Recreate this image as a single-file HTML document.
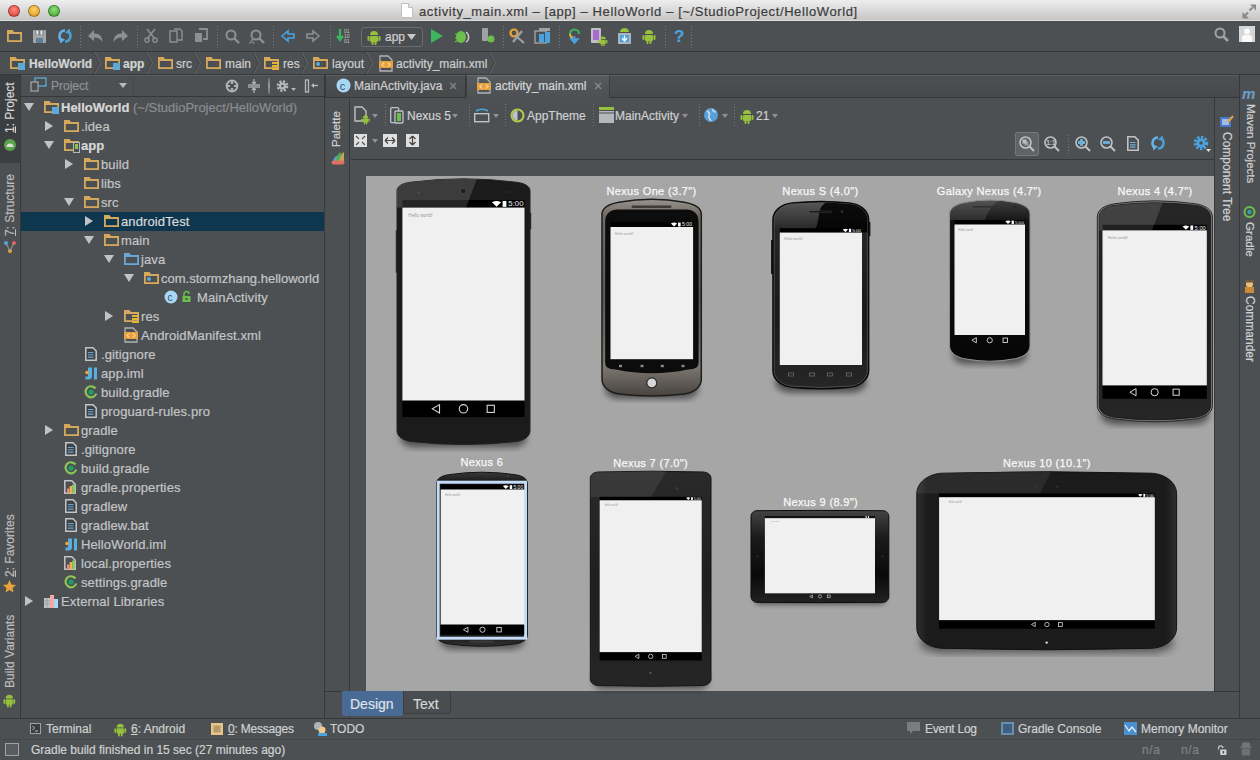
<!DOCTYPE html><html><head><meta charset="utf-8"><style>
*{margin:0;padding:0;box-sizing:border-box}
html,body{width:1260px;height:760px;overflow:hidden;background:#4d5053;font-family:"Liberation Sans",sans-serif;color:#bbbcbd}
.ab{position:absolute}
.t{position:absolute;white-space:nowrap;line-height:1;-webkit-text-stroke:0.2px currentColor}
svg{position:absolute;overflow:visible}
.vt{position:absolute;white-space:nowrap;line-height:1;-webkit-text-stroke:0.2px currentColor;transform-origin:0 0;transform:rotate(-90deg)}
.vr{position:absolute;white-space:nowrap;line-height:1;-webkit-text-stroke:0.2px currentColor;transform-origin:0 0;transform:rotate(90deg)}
</style></head><body>
<div class="ab" style="left:0px;top:0px;width:1260px;height:21px;background:linear-gradient(#eeeeee,#e6e6e6 20%,#c6c6c6);border-bottom:1px solid #dcdcdc"></div>
<div class="ab" style="left:8px;top:5px;width:12px;height:12px;border-radius:50%;background:radial-gradient(circle at 50% 35%,#ff8a80,#d63a2e);border:1px solid rgba(0,0,0,0.3)"></div>
<div class="ab" style="left:28px;top:5px;width:12px;height:12px;border-radius:50%;background:radial-gradient(circle at 50% 35%,#ffd36a,#d9951a);border:1px solid rgba(0,0,0,0.3)"></div>
<div class="ab" style="left:48px;top:5px;width:12px;height:12px;border-radius:50%;background:radial-gradient(circle at 50% 35%,#8ee07a,#3a9e2c);border:1px solid rgba(0,0,0,0.3)"></div>
<svg style="left:401px;top:3px" width="12" height="15" viewBox="0 0 12 15"><path d="M0.5 0.5h7l4 4v10h-11z" fill="#fff" stroke="#c0c0c0"/><path d="M7.5 0.5v4h4" fill="#e8e8e8" stroke="#c0c0c0"/></svg>
<div class="t" style="left:419px;top:5px;font-size:13px;color:#3c3c3c;letter-spacing:0.6px">activity_main.xml – [app] – HelloWorld – [~/StudioProject/HelloWorld]</div>
<svg style="left:1242px;top:4px" width="14" height="15" viewBox="0 0 14 15"><path d="M7.5 6.5l3-3" stroke="#8a8a8a" stroke-width="2"/><path d="M8 0.5h6v6z" fill="#8a8a8a"/><path d="M6 8.5l-3 3" stroke="#8a8a8a" stroke-width="2"/><path d="M0.5 8v6.5h6.5z" fill="#8a8a8a"/></svg>
<div class="ab" style="left:0px;top:51px;width:1260px;height:1px;background:#36383a"></div>
<svg style="left:7px;top:30px" width="15" height="12" viewBox="0 0 15 12"><path d="M0 0h5.5l1.5 2H15 v2H0z" fill="#d6a85c"/><rect x="0.9" y="2.9" width="13.2" height="8.2" fill="none" stroke="#d6a85c" stroke-width="1.8"/></svg>
<svg style="left:33px;top:30px" width="13" height="13" viewBox="0 0 13 13"><rect x="0" y="0" width="13" height="13" rx="1" fill="#a3a7aa"/><rect x="2.5" y="0" width="8" height="5" fill="#7c8083"/><rect x="3.5" y="0.5" width="1.8" height="4" fill="#eee"/><rect x="7.5" y="0.5" width="1.8" height="4" fill="#eee"/><rect x="3" y="8" width="7" height="5" fill="#5f7f98"/></svg>
<svg style="left:57px;top:28px" width="16" height="16" viewBox="0 0 16 16"><path d="M8 2.5A5.5 5.5 0 0 0 4.6 12.3" stroke="#62b2e4" stroke-width="2.6" fill="none"/><path d="M1.8 9.8L8 11.2 3.6 15.5Z" fill="#62b2e4"/><path d="M8 13.5A5.5 5.5 0 0 0 11.4 3.7" stroke="#4a9fd6" stroke-width="2.6" fill="none"/><path d="M14.2 6.2L8 4.8 12.4 0.5Z" fill="#4a9fd6"/></svg>
<svg style="left:80px;top:26px" width="1" height="22" viewBox="0 0 1 22"><line x1="0.5" y1="0" x2="0.5" y2="22" stroke="#75787a" stroke-dasharray="1 2"/></svg>
<svg style="left:88px;top:29px" width="15" height="13" viewBox="0 0 15 13"><path d="M0 7l6-6v3.5c5 0 8.5 2.5 8.5 8.5-2-3.5-5-4.5-8.5-4.5V12z" fill="#8d9093"/></svg>
<svg style="left:113px;top:29px" width="15" height="13" viewBox="0 0 15 13"><path d="M15 7l-6-6v3.5c-5 0-8.5 2.5-8.5 8.5 2-3.5 5-4.5 8.5-4.5V12z" fill="#8d9093"/></svg>
<svg style="left:137px;top:26px" width="1" height="22" viewBox="0 0 1 22"><line x1="0.5" y1="0" x2="0.5" y2="22" stroke="#75787a" stroke-dasharray="1 2"/></svg>
<svg style="left:144px;top:28px" width="14" height="15" viewBox="0 0 14 15"><path d="M3 1l8 10M11 1L3 11" stroke="#8d9093" stroke-width="1.5"/><circle cx="3" cy="12" r="2.2" fill="none" stroke="#8d9093" stroke-width="1.3"/><circle cx="11" cy="12" r="2.2" fill="none" stroke="#8d9093" stroke-width="1.3"/></svg>
<svg style="left:169px;top:28px" width="14" height="15" viewBox="0 0 14 15"><path d="M1 3h7v11H1z M5 1h6l2 2v9H8" fill="none" stroke="#8d9093" stroke-width="1.4"/></svg>
<svg style="left:194px;top:28px" width="14" height="15" viewBox="0 0 14 15"><path d="M1 5h7v9H1z" fill="#8d9093"/><path d="M5 1h8v10H9" fill="none" stroke="#8d9093" stroke-width="1.8"/></svg>
<svg style="left:217px;top:26px" width="1" height="22" viewBox="0 0 1 22"><line x1="0.5" y1="0" x2="0.5" y2="22" stroke="#75787a" stroke-dasharray="1 2"/></svg>
<svg style="left:225px;top:29px" width="15" height="15" viewBox="0 0 15 15"><circle cx="6" cy="6" r="4.5" fill="none" stroke="#8d9093" stroke-width="2"/><path d="M9 9l5 5" stroke="#8d9093" stroke-width="2.4"/></svg>
<svg style="left:249px;top:29px" width="16" height="16" viewBox="0 0 16 16"><circle cx="7" cy="6" r="4.5" fill="none" stroke="#8d9093" stroke-width="2"/><path d="M10 9l5 5" stroke="#8d9093" stroke-width="2.4"/><text x="0" y="15" font-size="8" fill="#8d9093" font-family="Liberation Sans">A</text></svg>
<svg style="left:273px;top:26px" width="1" height="22" viewBox="0 0 1 22"><line x1="0.5" y1="0" x2="0.5" y2="22" stroke="#75787a" stroke-dasharray="1 2"/></svg>
<svg style="left:281px;top:30px" width="14" height="12" viewBox="0 0 14 12"><path d="M1 6l6-5v3h6v4H7v3z" fill="none" stroke="#4aa3df" stroke-width="1.6"/></svg>
<svg style="left:306px;top:30px" width="14" height="12" viewBox="0 0 14 12"><path d="M13 6L7 1v3H1v4h6v3z" fill="none" stroke="#8d9093" stroke-width="1.6"/></svg>
<svg style="left:330px;top:26px" width="1" height="22" viewBox="0 0 1 22"><line x1="0.5" y1="0" x2="0.5" y2="22" stroke="#75787a" stroke-dasharray="1 2"/></svg>
<svg style="left:337px;top:28px" width="16" height="15" viewBox="0 0 16 15"><path d="M3 1v9M0 8l3 4 3-4" stroke="#3fb55d" stroke-width="2.2" fill="none"/><text x="7" y="5" font-size="5" fill="#c8c8c8" font-family="Liberation Sans">01</text><text x="7" y="10" font-size="5" fill="#c8c8c8" font-family="Liberation Sans">10</text><text x="7" y="15" font-size="5" fill="#c8c8c8" font-family="Liberation Sans">01</text></svg>
<div class="ab" style="left:361px;top:27px;width:62px;height:20px;border:1px solid #6a6d70;border-radius:3px;background:#4a4d50"></div>
<svg style="left:367px;top:29px" width="15" height="17" viewBox="0 0 15 17"><g transform="scale(1.0)"><path d="M3 6a4 4 0 0 1 8 0z" fill="#97c03d"/><rect x="3" y="7" width="8" height="6" rx="1" fill="#97c03d"/><rect x="0.5" y="7" width="2" height="5" rx="1" fill="#97c03d"/><rect x="11.5" y="7" width="2" height="5" rx="1" fill="#97c03d"/><rect x="4.5" y="12" width="2" height="4" rx="1" fill="#97c03d"/><rect x="7.5" y="12" width="2" height="4" rx="1" fill="#97c03d"/></g></svg>
<div class="t" style="left:385px;top:31px;font-size:12px;color:#d0d0d0;">app</div>
<svg style="left:407px;top:34px" width="9" height="6" viewBox="0 0 9 6"><path d="M0 0h9L4.5 6z" fill="#c8c8c8"/></svg>
<svg style="left:431px;top:29px" width="12" height="14" viewBox="0 0 12 14"><path d="M0 0l12 7-12 7z" fill="#3fb55d"/></svg>
<svg style="left:454px;top:29px" width="16" height="14" viewBox="0 0 16 14"><ellipse cx="7" cy="8" rx="5" ry="6" fill="#6bc04b"/><path d="M12 3a6 6 0 0 1 0 10" stroke="#c8c8c8" fill="none" stroke-width="1.5"/><path d="M1 5h3M1 9h3M1 13l3-2" stroke="#6bc04b" stroke-width="1.2"/></svg>
<svg style="left:481px;top:28px" width="14" height="16" viewBox="0 0 14 16"><rect x="1" y="0" width="6" height="13" rx="1" fill="#9da2a6"/><circle cx="10" cy="11" r="3.5" fill="#6bc04b"/></svg>
<svg style="left:503px;top:26px" width="1" height="22" viewBox="0 0 1 22"><line x1="0.5" y1="0" x2="0.5" y2="22" stroke="#75787a" stroke-dasharray="1 2"/></svg>
<svg style="left:509px;top:28px" width="17" height="16" viewBox="0 0 17 16"><circle cx="5" cy="5" r="3.5" fill="none" stroke="#e7a43a" stroke-width="2.2"/><path d="M7 8l8 7M13 3l-9 11" stroke="#9da2a6" stroke-width="2.2"/></svg>
<svg style="left:535px;top:28px" width="16" height="16" viewBox="0 0 16 16"><rect x="0" y="3" width="11" height="12" fill="none" stroke="#9da2a6" stroke-width="1.4"/><rect x="4" y="0" width="11" height="3" fill="#9da2a6"/><rect x="4" y="6" width="5" height="8" fill="#4aa3df"/><rect x="10" y="4" width="5" height="11" fill="#4aa3df"/></svg>
<svg style="left:559px;top:26px" width="1" height="22" viewBox="0 0 1 22"><line x1="0.5" y1="0" x2="0.5" y2="22" stroke="#75787a" stroke-dasharray="1 2"/></svg>
<svg style="left:568px;top:27px" width="13" height="17" viewBox="0 0 13 17"><path d="M2 7a4.5 4.5 0 1 1 9 0" stroke="#3fb55d" stroke-width="2.2" fill="none"/><path d="M2 7a4.5 4.5 0 0 0 3 4" stroke="#d6b84a" stroke-width="2" fill="none"/><path d="M6.5 9v4M3 12l3.5 4 3.5-4z" stroke="#4aa3df" fill="#4aa3df" stroke-width="1.6"/></svg>
<svg style="left:590px;top:28px" width="18" height="16" viewBox="0 0 18 16"><rect x="1" y="0" width="10" height="15" rx="1" fill="#c0c0c0"/><rect x="3" y="2" width="6" height="10" fill="#a86bd0"/></svg>
<svg style="left:598px;top:35px" width="10" height="12" viewBox="0 0 10 12"><g transform="scale(0.7)"><path d="M3 6a4 4 0 0 1 8 0z" fill="#97c03d"/><rect x="3" y="7" width="8" height="6" rx="1" fill="#97c03d"/><rect x="0.5" y="7" width="2" height="5" rx="1" fill="#97c03d"/><rect x="11.5" y="7" width="2" height="5" rx="1" fill="#97c03d"/><rect x="4.5" y="12" width="2" height="4" rx="1" fill="#97c03d"/><rect x="7.5" y="12" width="2" height="4" rx="1" fill="#97c03d"/></g></svg>
<svg style="left:618px;top:28px" width="13" height="16" viewBox="0 0 13 16"><path d="M2 4a4.5 4 0 0 1 9 0z" fill="#97c03d"/><rect x="0" y="5" width="13" height="11" fill="#b0b3b5"/><rect x="2" y="7" width="9" height="7" fill="#4aa3df"/><path d="M6.5 7.5v5M4 10l2.5 3 2.5-3" stroke="#fff" fill="none" stroke-width="1.3"/></svg>
<svg style="left:642px;top:28px" width="15" height="17" viewBox="0 0 15 17"><g transform="scale(1.0)"><path d="M3 6a4 4 0 0 1 8 0z" fill="#97c03d"/><rect x="3" y="7" width="8" height="6" rx="1" fill="#97c03d"/><rect x="0.5" y="7" width="2" height="5" rx="1" fill="#97c03d"/><rect x="11.5" y="7" width="2" height="5" rx="1" fill="#97c03d"/><rect x="4.5" y="12" width="2" height="4" rx="1" fill="#97c03d"/><rect x="7.5" y="12" width="2" height="4" rx="1" fill="#97c03d"/></g></svg>
<svg style="left:665px;top:26px" width="1" height="22" viewBox="0 0 1 22"><line x1="0.5" y1="0" x2="0.5" y2="22" stroke="#75787a" stroke-dasharray="1 2"/></svg>
<div class="t" style="left:674px;top:28px;font-size:17px;color:#4aa3df;font-weight:bold">?</div>
<svg style="left:691px;top:26px" width="1" height="22" viewBox="0 0 1 22"><line x1="0.5" y1="0" x2="0.5" y2="22" stroke="#75787a" stroke-dasharray="1 2"/></svg>
<svg style="left:1214px;top:27px" width="16" height="16" viewBox="0 0 16 16"><circle cx="6" cy="6" r="4.5" fill="none" stroke="#a0a3a6" stroke-width="2"/><path d="M9 9l5 5" stroke="#a0a3a6" stroke-width="2.6"/></svg>
<div class="ab" style="left:1239px;top:26px;width:16px;height:16px;background:#d6d6d6"></div>
<svg style="left:1239px;top:26px" width="16" height="16" viewBox="0 0 16 16"><circle cx="8" cy="5.5" r="3" fill="#fafafa"/><path d="M3 16v-4.5q0-2.5 2.5-2.5h5q2.5 0 2.5 2.5V16z" fill="#fafafa"/></svg>
<div class="ab" style="left:0px;top:74px;width:1260px;height:1px;background:#36383a"></div>
<svg style="left:10px;top:57px" width="15" height="12" viewBox="0 0 15 12"><path d="M0 0h5.5l1.5 2H15 v2H0z" fill="#d6a85c"/><rect x="0.9" y="2.9" width="13.2" height="8.2" fill="none" stroke="#d6a85c" stroke-width="1.8"/></svg>
<svg style="left:18px;top:63px" width="7" height="7" viewBox="0 0 7 7"><rect width="7" height="7" fill="#5fa9d8"/></svg>
<div class="t" style="left:29px;top:58px;font-size:12px;color:#d4d4d4;font-weight:bold">HelloWorld</div>
<svg style="left:92.5px;top:52px" width="8" height="22" viewBox="0 0 8 22"><path d="M0.5 0l6 11-6 11" stroke="#3a3c3e" fill="none" stroke-width="1"/><path d="M1.5 0l6 11-6 11" stroke="#65686b" fill="none" stroke-width="0.9"/></svg>
<svg style="left:105px;top:57px" width="15" height="12" viewBox="0 0 15 12"><path d="M0 0h5.5l1.5 2H15 v2H0z" fill="#d6a85c"/><rect x="0.9" y="2.9" width="13.2" height="8.2" fill="none" stroke="#d6a85c" stroke-width="1.8"/></svg>
<svg style="left:113px;top:63px" width="7" height="7" viewBox="0 0 7 7"><rect width="7" height="7" fill="#5fa9d8"/></svg>
<div class="t" style="left:123px;top:58px;font-size:12px;color:#d4d4d4;font-weight:bold">app</div>
<svg style="left:144.5px;top:52px" width="8" height="22" viewBox="0 0 8 22"><path d="M0.5 0l6 11-6 11" stroke="#3a3c3e" fill="none" stroke-width="1"/><path d="M1.5 0l6 11-6 11" stroke="#65686b" fill="none" stroke-width="0.9"/></svg>
<svg style="left:158px;top:57px" width="15" height="12" viewBox="0 0 15 12"><path d="M0 0h5.5l1.5 2H15 v2H0z" fill="#d6a85c"/><rect x="0.9" y="2.9" width="13.2" height="8.2" fill="none" stroke="#d6a85c" stroke-width="1.8"/></svg>
<div class="t" style="left:176px;top:58px;font-size:12px;color:#cfcfcf;">src</div>
<svg style="left:192.5px;top:52px" width="8" height="22" viewBox="0 0 8 22"><path d="M0.5 0l6 11-6 11" stroke="#3a3c3e" fill="none" stroke-width="1"/><path d="M1.5 0l6 11-6 11" stroke="#65686b" fill="none" stroke-width="0.9"/></svg>
<svg style="left:206px;top:57px" width="15" height="12" viewBox="0 0 15 12"><path d="M0 0h5.5l1.5 2H15 v2H0z" fill="#d6a85c"/><rect x="0.9" y="2.9" width="13.2" height="8.2" fill="none" stroke="#d6a85c" stroke-width="1.8"/></svg>
<div class="t" style="left:225px;top:58px;font-size:12px;color:#cfcfcf;">main</div>
<svg style="left:251.8px;top:52px" width="8" height="22" viewBox="0 0 8 22"><path d="M0.5 0l6 11-6 11" stroke="#3a3c3e" fill="none" stroke-width="1"/><path d="M1.5 0l6 11-6 11" stroke="#65686b" fill="none" stroke-width="0.9"/></svg>
<svg style="left:264px;top:57px" width="15" height="12" viewBox="0 0 15 12"><path d="M0 0h5.5l1.5 2H15 v2H0z" fill="#d6a85c"/><rect x="0.9" y="2.9" width="13.2" height="8.2" fill="none" stroke="#d6a85c" stroke-width="1.8"/></svg>
<svg style="left:272px;top:62px" width="7" height="8" viewBox="0 0 7 8"><rect y="0" width="7" height="2" fill="#e2b23a"/><rect y="3" width="7" height="2" fill="#e2b23a"/><rect y="6" width="7" height="2" fill="#e2b23a"/></svg>
<div class="t" style="left:283px;top:58px;font-size:12px;color:#cfcfcf;">res</div>
<svg style="left:300.2px;top:52px" width="8" height="22" viewBox="0 0 8 22"><path d="M0.5 0l6 11-6 11" stroke="#3a3c3e" fill="none" stroke-width="1"/><path d="M1.5 0l6 11-6 11" stroke="#65686b" fill="none" stroke-width="0.9"/></svg>
<svg style="left:313px;top:57px" width="15" height="12" viewBox="0 0 15 12"><path d="M0 0h5.5l1.5 2H15 v2H0z" fill="#d6a85c"/><rect x="0.9" y="2.9" width="13.2" height="8.2" fill="none" stroke="#d6a85c" stroke-width="1.8"/></svg>
<svg style="left:316px;top:62px" width="4" height="4" viewBox="0 0 4 4"><circle cx="2" cy="2" r="2" fill="#5fa9d8"/></svg>
<div class="t" style="left:332px;top:58px;font-size:12px;color:#cfcfcf;">layout</div>
<svg style="left:365.2px;top:52px" width="8" height="22" viewBox="0 0 8 22"><path d="M0.5 0l6 11-6 11" stroke="#3a3c3e" fill="none" stroke-width="1"/><path d="M1.5 0l6 11-6 11" stroke="#65686b" fill="none" stroke-width="0.9"/></svg>
<svg style="left:379px;top:55px" width="14" height="17" viewBox="0 0 14 17"><path d="M1 1h8l4 4v11H1z" fill="none" stroke="#b0b3b5" stroke-width="1.3"/><rect x="0" y="6" width="14" height="7" fill="#e9a23b"/><path d="M5 7.5l-2 2 2 2M9 7.5l2 2-2 2" stroke="#fff" fill="none"/></svg>
<div class="t" style="left:396px;top:58px;font-size:12px;color:#cfcfcf;">activity_main.xml</div>
<svg style="left:487.5px;top:52px" width="8" height="22" viewBox="0 0 8 22"><path d="M0.5 0l6 11-6 11" stroke="#3a3c3e" fill="none" stroke-width="1"/><path d="M1.5 0l6 11-6 11" stroke="#65686b" fill="none" stroke-width="0.9"/></svg>
<div class="ab" style="left:20px;top:75px;width:1px;height:643px;background:#36383a"></div>
<div class="ab" style="left:0px;top:75px;width:20px;height:88px;background:#3c3f41"></div>
<div class="vt" style="left:4px;top:133px;font-size:12px;color:#d6d6d6;"><u>1</u>: Project</div>
<svg style="left:3px;top:138px" width="14" height="14" viewBox="0 0 14 14"><circle cx="7" cy="7" r="6" fill="#5aa34a"/><path d="M3.5 9a3.5 3.5 0 0 1 7 0z" fill="#ddd"/></svg>
<div class="vt" style="left:4px;top:236px;font-size:12px;color:#bbbcbd;"><u>7</u>: Structure</div>
<svg style="left:3px;top:240px" width="14" height="14" viewBox="0 0 14 14"><circle cx="3" cy="3" r="2" fill="#4aa3df"/><circle cx="11" cy="3" r="2" fill="#e06060"/><circle cx="7" cy="11" r="2" fill="#e7a43a"/><path d="M3 3L7 11L11 3" stroke="#9da2a6" fill="none"/></svg>
<div class="vt" style="left:4px;top:577px;font-size:12px;color:#bbbcbd;"><u>2</u>: Favorites</div>
<svg style="left:3px;top:580px" width="13" height="13" viewBox="0 0 13 13"><path d="M6.5 0l2 4.5 4.5.5-3.5 3 1 4.5-4-2.5-4 2.5 1-4.5L0 5l4.5-.5z" fill="#e7a43a"/></svg>
<div class="vt" style="left:4px;top:688px;font-size:12px;color:#bbbcbd;">Build Variants</div>
<svg style="left:3px;top:693px" width="13" height="15" viewBox="0 0 13 15"><g transform="scale(0.9)"><path d="M3 6a4 4 0 0 1 8 0z" fill="#97c03d"/><rect x="3" y="7" width="8" height="6" rx="1" fill="#97c03d"/><rect x="0.5" y="7" width="2" height="5" rx="1" fill="#97c03d"/><rect x="11.5" y="7" width="2" height="5" rx="1" fill="#97c03d"/><rect x="4.5" y="12" width="2" height="4" rx="1" fill="#97c03d"/><rect x="7.5" y="12" width="2" height="4" rx="1" fill="#97c03d"/></g></svg>
<div class="ab" style="left:21px;top:75px;width:303px;height:22px;background:#4d5053;border-top:1px solid #5b5e61;border-bottom:1px solid #36383a"></div>
<svg style="left:30px;top:76px" width="17" height="16" viewBox="0 0 17 16"><rect x="5" y="2" width="11" height="8" fill="none" stroke="#5fa9d8" stroke-width="1.3"/><rect x="1" y="6" width="7" height="9" fill="#4d5053" stroke="#9da2a6" stroke-width="1.3"/></svg>
<div class="t" style="left:51px;top:80px;font-size:12px;color:#8f9295;">Project</div>
<svg style="left:119px;top:83px" width="8" height="5" viewBox="0 0 8 5"><path d="M0 0h8L4 5z" fill="#bbb"/></svg>
<div class="ab" style="left:133px;top:77px;width:1px;height:18px;background:#45484a"></div>
<svg style="left:225px;top:79px" width="14" height="14" viewBox="0 0 14 14"><circle cx="7" cy="7" r="5.4" fill="none" stroke="#aeb1b3" stroke-width="2"/><path d="M7 2v3M7 9v3M2 7h3M9 7h3" stroke="#aeb1b3" stroke-width="2.2"/></svg>
<svg style="left:247px;top:79px" width="14" height="14" viewBox="0 0 14 14"><rect x="1" y="5" width="12" height="4" fill="#8f9295"/><path d="M7 0v5M5 3l2 2 2-2M7 14V9M5 11l2-2 2 2" stroke="#b5b8ba" stroke-width="1.2" fill="none"/></svg>
<div class="ab" style="left:268px;top:78px;width:2px;height:16px;background:linear-gradient(#6a6d70,#9a9d9f,#6a6d70)"></div>
<svg style="left:276px;top:79px" width="20" height="14" viewBox="0 0 20 14"><circle cx="6.5" cy="7" r="4.6" fill="none" stroke="#b5b8ba" stroke-width="2.6" stroke-dasharray="2.1 1.5"/><circle cx="6.5" cy="7" r="3.6" fill="#b5b8ba"/><circle cx="6.5" cy="7" r="1.3" fill="#4d5053"/><path d="M15 9h5l-2.5 3z" fill="#b5b8ba"/></svg>
<svg style="left:304px;top:79px" width="14" height="14" viewBox="0 0 14 14"><rect x="1.5" y="1" width="3" height="12" fill="none" stroke="#b5b8ba" stroke-width="1.3"/><path d="M8 6.5h6" stroke="#b5b8ba" stroke-width="1.4"/><path d="M7 6.5l3-2.5v5z" fill="#b5b8ba"/></svg>
<div class="ab" style="left:324px;top:75px;width:1px;height:643px;background:#36383a"></div>
<div class="ab" style="left:21px;top:212px;width:303px;height:19px;background:#0e364f"></div>
<svg style="left:24px;top:103px" width="10" height="9" viewBox="0 0 10 9"><path d="M0 0h10L5 8z" fill="#c0c3c5"/></svg>
<svg style="left:44px;top:101px" width="15" height="12" viewBox="0 0 15 12"><path d="M0 0h5.5l1.5 2H15 v2H0z" fill="#d6a85c"/><rect x="0.9" y="2.9" width="13.2" height="8.2" fill="none" stroke="#d6a85c" stroke-width="1.8"/></svg>
<svg style="left:52px;top:107px" width="7" height="7" viewBox="0 0 7 7"><rect width="7" height="7" fill="#5fa9d8"/></svg>
<div class="t" style="left:61px;top:101px;font-size:13px;color:#d8d8d8;font-weight:bold">HelloWorld</div>
<div class="t" style="left:133px;top:101px;font-size:13px;color:#8a8d90;">(~/StudioProject/HelloWorld)</div>
<svg style="left:45px;top:121px" width="9" height="10" viewBox="0 0 9 10"><path d="M0 0l8 5-8 5z" fill="#c0c3c5"/></svg>
<svg style="left:64px;top:120px" width="15" height="12" viewBox="0 0 15 12"><path d="M0 0h5.5l1.5 2H15 v2H0z" fill="#d6a85c"/><rect x="0.9" y="2.9" width="13.2" height="8.2" fill="none" stroke="#d6a85c" stroke-width="1.8"/></svg>
<div class="t" style="left:81px;top:120px;font-size:13px;color:#c3c5c7;letter-spacing:0.12px">.idea</div>
<svg style="left:44px;top:141px" width="10" height="9" viewBox="0 0 10 9"><path d="M0 0h10L5 8z" fill="#c0c3c5"/></svg>
<svg style="left:64px;top:139px" width="15" height="12" viewBox="0 0 15 12"><path d="M0 0h5.5l1.5 2H15 v2H0z" fill="#d6a85c"/><rect x="0.9" y="2.9" width="13.2" height="8.2" fill="none" stroke="#d6a85c" stroke-width="1.8"/></svg>
<svg style="left:73px;top:142px" width="7" height="11" viewBox="0 0 7 11"><rect x="0.5" y="0.5" width="6" height="10" fill="#4d5053" stroke="#b5b8ba"/><rect x="2" y="2" width="3" height="5" fill="#8bc34a"/></svg>
<div class="t" style="left:81px;top:139px;font-size:13px;color:#d8d8d8;font-weight:bold">app</div>
<svg style="left:65px;top:159px" width="9" height="10" viewBox="0 0 9 10"><path d="M0 0l8 5-8 5z" fill="#c0c3c5"/></svg>
<svg style="left:84px;top:158px" width="15" height="12" viewBox="0 0 15 12"><path d="M0 0h5.5l1.5 2H15 v2H0z" fill="#d6a85c"/><rect x="0.9" y="2.9" width="13.2" height="8.2" fill="none" stroke="#d6a85c" stroke-width="1.8"/></svg>
<div class="t" style="left:101px;top:158px;font-size:13px;color:#c3c5c7;letter-spacing:0.12px">build</div>
<svg style="left:84px;top:177px" width="15" height="12" viewBox="0 0 15 12"><path d="M0 0h5.5l1.5 2H15 v2H0z" fill="#d6a85c"/><rect x="0.9" y="2.9" width="13.2" height="8.2" fill="none" stroke="#d6a85c" stroke-width="1.8"/></svg>
<div class="t" style="left:101px;top:177px;font-size:13px;color:#c3c5c7;letter-spacing:0.12px">libs</div>
<svg style="left:64px;top:198px" width="10" height="9" viewBox="0 0 10 9"><path d="M0 0h10L5 8z" fill="#c0c3c5"/></svg>
<svg style="left:84px;top:196px" width="15" height="12" viewBox="0 0 15 12"><path d="M0 0h5.5l1.5 2H15 v2H0z" fill="#d6a85c"/><rect x="0.9" y="2.9" width="13.2" height="8.2" fill="none" stroke="#d6a85c" stroke-width="1.8"/></svg>
<div class="t" style="left:101px;top:196px;font-size:13px;color:#c3c5c7;letter-spacing:0.12px">src</div>
<svg style="left:85px;top:216px" width="9" height="10" viewBox="0 0 9 10"><path d="M0 0l8 5-8 5z" fill="#c0c3c5"/></svg>
<svg style="left:104px;top:215px" width="15" height="12" viewBox="0 0 15 12"><path d="M0 0h5.5l1.5 2H15 v2H0z" fill="#d6a85c"/><rect x="0.9" y="2.9" width="13.2" height="8.2" fill="none" stroke="#d6a85c" stroke-width="1.8"/></svg>
<div class="t" style="left:121px;top:215px;font-size:13px;color:#dadada;letter-spacing:0.12px">androidTest</div>
<svg style="left:84px;top:236px" width="10" height="9" viewBox="0 0 10 9"><path d="M0 0h10L5 8z" fill="#c0c3c5"/></svg>
<svg style="left:104px;top:234px" width="15" height="12" viewBox="0 0 15 12"><path d="M0 0h5.5l1.5 2H15 v2H0z" fill="#d6a85c"/><rect x="0.9" y="2.9" width="13.2" height="8.2" fill="none" stroke="#d6a85c" stroke-width="1.8"/></svg>
<div class="t" style="left:121px;top:234px;font-size:13px;color:#c3c5c7;letter-spacing:0.12px">main</div>
<svg style="left:104px;top:255px" width="10" height="9" viewBox="0 0 10 9"><path d="M0 0h10L5 8z" fill="#c0c3c5"/></svg>
<svg style="left:124px;top:253px" width="15" height="12" viewBox="0 0 15 12"><path d="M0 0h5.5l1.5 2H15 v2H0z" fill="#6ba6d4"/><rect x="0.9" y="2.9" width="13.2" height="8.2" fill="none" stroke="#6ba6d4" stroke-width="1.8"/></svg>
<div class="t" style="left:141px;top:253px;font-size:13px;color:#c3c5c7;letter-spacing:0.12px">java</div>
<svg style="left:124px;top:274px" width="10" height="9" viewBox="0 0 10 9"><path d="M0 0h10L5 8z" fill="#c0c3c5"/></svg>
<svg style="left:144px;top:272px" width="15" height="12" viewBox="0 0 15 12"><path d="M0 0h5.5l1.5 2H15 v2H0z" fill="#d6a85c"/><rect x="0.9" y="2.9" width="13.2" height="8.2" fill="none" stroke="#d6a85c" stroke-width="1.8"/></svg>
<svg style="left:147px;top:277px" width="4" height="4" viewBox="0 0 4 4"><circle cx="2" cy="2" r="2" fill="#5fa9d8"/></svg>
<div class="t" style="left:161px;top:272px;font-size:13px;color:#c3c5c7;letter-spacing:0px">com.stormzhang.helloworld</div>
<svg style="left:164px;top:290px" width="14" height="14" viewBox="0 0 14 14"><circle cx="7" cy="7" r="6.5" fill="#a8d6f5"/><text x="3.6" y="10.8" font-size="10" fill="#35526b" font-family="Liberation Sans">c</text></svg>
<svg style="left:182px;top:291px" width="10" height="11" viewBox="0 0 10 11"><rect x="0.5" y="5" width="8" height="6" fill="#6bc04b"/><path d="M2 5V3a2.5 2.5 0 0 1 5 0" stroke="#6bc04b" fill="none" stroke-width="1.4"/><rect x="3.5" y="7" width="2" height="2" fill="#4d5053"/></svg>
<div class="t" style="left:197px;top:291px;font-size:13px;color:#c3c5c7;letter-spacing:0.12px">MainActivity</div>
<svg style="left:105px;top:311px" width="9" height="10" viewBox="0 0 9 10"><path d="M0 0l8 5-8 5z" fill="#c0c3c5"/></svg>
<svg style="left:124px;top:310px" width="15" height="12" viewBox="0 0 15 12"><path d="M0 0h5.5l1.5 2H15 v2H0z" fill="#d6a85c"/><rect x="0.9" y="2.9" width="13.2" height="8.2" fill="none" stroke="#d6a85c" stroke-width="1.8"/></svg>
<svg style="left:132px;top:315px" width="7" height="8" viewBox="0 0 7 8"><rect y="0" width="7" height="2" fill="#e2b23a"/><rect y="3" width="7" height="2" fill="#e2b23a"/><rect y="6" width="7" height="2" fill="#e2b23a"/></svg>
<div class="t" style="left:141px;top:310px;font-size:13px;color:#c3c5c7;letter-spacing:0.12px">res</div>
<svg style="left:124px;top:327px" width="14" height="16" viewBox="0 0 14 16"><path d="M1 1h8l4 4v10H1z" fill="none" stroke="#b0b3b5" stroke-width="1.3"/><rect x="0" y="5" width="14" height="7" fill="#e9a23b"/><path d="M5 6.5l-2 2 2 2M9 6.5l2 2-2 2" stroke="#fff" fill="none"/></svg>
<div class="t" style="left:141px;top:329px;font-size:13px;color:#c3c5c7;letter-spacing:0.12px">AndroidManifest.xml</div>
<svg style="left:85px;top:347px" width="12" height="14" viewBox="0 0 12 14"><path d="M0.8 0.8h7.2l3.2 3.2v9.2H0.8z" fill="#3f4244" stroke="#c3c6c8" stroke-width="1.5"/><path d="M3 5.5h5.5M3 7.8h5.5M3 10.1h5.5" stroke="#6ba6d4" stroke-width="1.1"/></svg>
<div class="t" style="left:101px;top:348px;font-size:13px;color:#c3c5c7;letter-spacing:0.12px">.gitignore</div>
<svg style="left:84px;top:367px" width="14" height="13" viewBox="0 0 14 13"><path d="M4 0.5h4v8.5a3.5 3.5 0 0 1-3.5 3.5H1.5V9.5h2.5z" fill="#5aaee0"/><circle cx="3" cy="5.5" r="1.8" fill="#f0a830"/><rect x="10" y="0.5" width="3" height="12" fill="#5aaee0"/></svg>
<div class="t" style="left:101px;top:367px;font-size:13px;color:#c3c5c7;letter-spacing:0.12px">app.iml</div>
<svg style="left:84px;top:385px" width="14" height="14" viewBox="0 0 14 14"><path d="M11.5 3.5A5.5 5.5 0 1 0 12.3 8.5" fill="none" stroke="#8cc657" stroke-width="2.2"/><circle cx="7" cy="7" r="2.6" fill="#1f9f6a"/></svg>
<div class="t" style="left:101px;top:386px;font-size:13px;color:#c3c5c7;letter-spacing:0.12px">build.gradle</div>
<svg style="left:85px;top:404px" width="12" height="14" viewBox="0 0 12 14"><path d="M0.8 0.8h7.2l3.2 3.2v9.2H0.8z" fill="#3f4244" stroke="#c3c6c8" stroke-width="1.5"/><path d="M3 5.5h5.5M3 7.8h5.5M3 10.1h5.5" stroke="#6ba6d4" stroke-width="1.1"/></svg>
<div class="t" style="left:101px;top:405px;font-size:13px;color:#c3c5c7;letter-spacing:0.12px">proguard-rules.pro</div>
<svg style="left:45px;top:425px" width="9" height="10" viewBox="0 0 9 10"><path d="M0 0l8 5-8 5z" fill="#c0c3c5"/></svg>
<svg style="left:64px;top:424px" width="15" height="12" viewBox="0 0 15 12"><path d="M0 0h5.5l1.5 2H15 v2H0z" fill="#d6a85c"/><rect x="0.9" y="2.9" width="13.2" height="8.2" fill="none" stroke="#d6a85c" stroke-width="1.8"/></svg>
<div class="t" style="left:81px;top:424px;font-size:13px;color:#c3c5c7;letter-spacing:0.12px">gradle</div>
<svg style="left:65px;top:442px" width="12" height="14" viewBox="0 0 12 14"><path d="M0.8 0.8h7.2l3.2 3.2v9.2H0.8z" fill="#3f4244" stroke="#c3c6c8" stroke-width="1.5"/><path d="M3 5.5h5.5M3 7.8h5.5M3 10.1h5.5" stroke="#6ba6d4" stroke-width="1.1"/></svg>
<div class="t" style="left:81px;top:443px;font-size:13px;color:#c3c5c7;letter-spacing:0.12px">.gitignore</div>
<svg style="left:64px;top:461px" width="14" height="14" viewBox="0 0 14 14"><path d="M11.5 3.5A5.5 5.5 0 1 0 12.3 8.5" fill="none" stroke="#8cc657" stroke-width="2.2"/><circle cx="7" cy="7" r="2.6" fill="#1f9f6a"/></svg>
<div class="t" style="left:81px;top:462px;font-size:13px;color:#c3c5c7;letter-spacing:0.12px">build.gradle</div>
<svg style="left:64px;top:480px" width="13" height="14" viewBox="0 0 13 14"><path d="M0.8 0.8h7l3.4 3.4v9H0.8z" fill="#4d5053" stroke="#c3c6c8" stroke-width="1.5"/><rect x="3" y="8.5" width="2.4" height="5" fill="#f08a80"/><rect x="5.6" y="6" width="2.4" height="7.5" fill="#f0b050"/><rect x="8.2" y="4.5" width="2.6" height="9" fill="#8cd060"/></svg>
<div class="t" style="left:81px;top:481px;font-size:13px;color:#c3c5c7;letter-spacing:0.12px">gradle.properties</div>
<svg style="left:65px;top:499px" width="12" height="14" viewBox="0 0 12 14"><path d="M0.8 0.8h7.2l3.2 3.2v9.2H0.8z" fill="#3f4244" stroke="#c3c6c8" stroke-width="1.5"/><path d="M3 5.5h5.5M3 7.8h5.5M3 10.1h5.5" stroke="#6ba6d4" stroke-width="1.1"/></svg>
<div class="t" style="left:81px;top:500px;font-size:13px;color:#c3c5c7;letter-spacing:0.12px">gradlew</div>
<svg style="left:65px;top:518px" width="12" height="14" viewBox="0 0 12 14"><path d="M0.8 0.8h7.2l3.2 3.2v9.2H0.8z" fill="#3f4244" stroke="#c3c6c8" stroke-width="1.5"/><path d="M3 5.5h5.5M3 7.8h5.5M3 10.1h5.5" stroke="#6ba6d4" stroke-width="1.1"/></svg>
<div class="t" style="left:81px;top:519px;font-size:13px;color:#c3c5c7;letter-spacing:0.12px">gradlew.bat</div>
<svg style="left:64px;top:538px" width="14" height="13" viewBox="0 0 14 13"><path d="M4 0.5h4v8.5a3.5 3.5 0 0 1-3.5 3.5H1.5V9.5h2.5z" fill="#5aaee0"/><circle cx="3" cy="5.5" r="1.8" fill="#f0a830"/><rect x="10" y="0.5" width="3" height="12" fill="#5aaee0"/></svg>
<div class="t" style="left:81px;top:538px;font-size:13px;color:#c3c5c7;letter-spacing:0.12px">HelloWorld.iml</div>
<svg style="left:64px;top:556px" width="13" height="14" viewBox="0 0 13 14"><path d="M0.8 0.8h7l3.4 3.4v9H0.8z" fill="#4d5053" stroke="#c3c6c8" stroke-width="1.5"/><rect x="3" y="8.5" width="2.4" height="5" fill="#f08a80"/><rect x="5.6" y="6" width="2.4" height="7.5" fill="#f0b050"/><rect x="8.2" y="4.5" width="2.6" height="9" fill="#8cd060"/></svg>
<div class="t" style="left:81px;top:557px;font-size:13px;color:#c3c5c7;letter-spacing:0.12px">local.properties</div>
<svg style="left:64px;top:575px" width="14" height="14" viewBox="0 0 14 14"><path d="M11.5 3.5A5.5 5.5 0 1 0 12.3 8.5" fill="none" stroke="#8cc657" stroke-width="2.2"/><circle cx="7" cy="7" r="2.6" fill="#1f9f6a"/></svg>
<div class="t" style="left:81px;top:576px;font-size:13px;color:#c3c5c7;letter-spacing:0.12px">settings.gradle</div>
<svg style="left:25px;top:596px" width="9" height="10" viewBox="0 0 9 10"><path d="M0 0l8 5-8 5z" fill="#c0c3c5"/></svg>
<svg style="left:44px;top:595px" width="15" height="13" viewBox="0 0 15 13"><rect x="0" y="3" width="6" height="10" fill="#c0c2c4"/><path d="M0 6h6M0 9h6M3 3v10" stroke="#8a8d90" stroke-width="0.6"/><rect x="6" y="0" width="4" height="13" fill="#f0a8a8"/><rect x="10" y="4" width="4" height="9" fill="#a8d8f4"/></svg>
<div class="t" style="left:61px;top:595px;font-size:13px;color:#c3c5c7;letter-spacing:0.12px">External Libraries</div>
<div class="ab" style="left:325px;top:75px;width:914px;height:23px;background:linear-gradient(#4d5052,#47494b);border-top:1px solid #5a5d5f;border-bottom:1px solid #343638"></div>
<div class="ab" style="left:325px;top:98px;width:914px;height:1px;background:#595c5f"></div>
<div class="ab" style="left:325px;top:75px;width:141px;height:23px;background:linear-gradient(#4d5052,#47494b);border:1px solid #36383a;border-top:1px solid #5a5d5f"></div>
<svg style="left:336px;top:78px" width="15" height="15" viewBox="0 0 15 15"><circle cx="7.5" cy="7.5" r="7" fill="#a8d6f5"/><text x="3.8" y="11.5" font-size="11" fill="#35526b" font-family="Liberation Sans">c</text></svg>
<div class="t" style="left:354px;top:80px;font-size:12px;color:#cfd0d1;">MainActivity.java</div>
<div class="t" style="left:449px;top:79px;font-size:14px;color:#8a8d90;">×</div>
<div class="ab" style="left:466px;top:75px;width:144px;height:24px;background:linear-gradient(#585b5e,#4d5053);border:1px solid #3a3c3e;border-top:1px solid #6a6d70;border-bottom:none"></div>
<svg style="left:477px;top:77px" width="14" height="17" viewBox="0 0 14 17"><path d="M1 1h8l4 4v11H1z" fill="none" stroke="#b0b3b5" stroke-width="1.3"/><rect x="0" y="6" width="14" height="7" fill="#e9a23b"/><path d="M5 7.5l-2 2 2 2M9 7.5l2 2-2 2" stroke="#fff" fill="none"/></svg>
<div class="t" style="left:495px;top:80px;font-size:12px;color:#d6d7d8;">activity_main.xml</div>
<div class="t" style="left:594px;top:79px;font-size:14px;color:#8a8d90;">×</div>
<div class="ab" style="left:349px;top:98px;width:1px;height:620px;background:#36383a"></div>
<div class="ab" style="left:325px;top:98px;width:24px;height:593px;background:#4d5053"></div>
<div class="ab" style="left:325px;top:691px;width:24px;height:27px;background:#4d5053"></div>
<div class="ab" style="left:325px;top:691px;width:24px;height:1px;background:#36383a"></div>
<div class="vt" style="left:331px;top:147px;font-size:11.5px;color:#cfd0d1;">Palette</div>
<svg style="left:331px;top:151px" width="14" height="14" viewBox="0 0 14 14"><path d="M2 10 Q3 5 8 4 L9 10z" fill="#5a9fd6"/><path d="M5 10 Q6 3 10 1 L11 10z" fill="#4caf50"/><path d="M8 10 Q10 2 13 1 L13 10z" fill="#c8a060"/><rect x="0.5" y="9.5" width="13" height="4" rx="2" fill="#e07060"/></svg>
<div class="ab" style="left:351px;top:98px;width:864px;height:62px;background:#4d5053;border-bottom:1px solid #36383a"></div>
<svg style="left:354px;top:106px" width="16" height="17" viewBox="0 0 16 17"><path d="M1 1h7l4 4v10H1z" fill="none" stroke="#c0c3c5" stroke-width="1.4"/></svg>
<svg style="left:361px;top:114px" width="10" height="11" viewBox="0 0 10 11"><g transform="scale(0.65)"><path d="M3 6a4 4 0 0 1 8 0z" fill="#97c03d"/><rect x="3" y="7" width="8" height="6" rx="1" fill="#97c03d"/><rect x="0.5" y="7" width="2" height="5" rx="1" fill="#97c03d"/><rect x="11.5" y="7" width="2" height="5" rx="1" fill="#97c03d"/><rect x="4.5" y="12" width="2" height="4" rx="1" fill="#97c03d"/><rect x="7.5" y="12" width="2" height="4" rx="1" fill="#97c03d"/></g></svg>
<svg style="left:372px;top:114px" width="6" height="4" viewBox="0 0 6 4"><path d="M0 0h6L3 4z" fill="#8f9295"/></svg>
<svg style="left:385px;top:104px" width="1" height="24" viewBox="0 0 1 24"><line x1="0.5" y1="0" x2="0.5" y2="24" stroke="#75787a" stroke-dasharray="1 2"/></svg>
<svg style="left:390px;top:107px" width="14" height="17" viewBox="0 0 14 17"><rect x="0.7" y="0.7" width="8" height="15" rx="1" fill="none" stroke="#c0c3c5" stroke-width="1.3"/><rect x="5" y="4" width="8" height="12" rx="1" fill="#4d5053" stroke="#c0c3c5" stroke-width="1.3"/><rect x="7" y="6" width="4" height="8" fill="#6bc04b"/></svg>
<div class="t" style="left:407px;top:110px;font-size:12px;color:#cfd0d1;">Nexus 5</div>
<svg style="left:452px;top:114px" width="6" height="4" viewBox="0 0 6 4"><path d="M0 0h6L3 4z" fill="#8f9295"/></svg>
<svg style="left:469px;top:104px" width="1" height="24" viewBox="0 0 1 24"><line x1="0.5" y1="0" x2="0.5" y2="24" stroke="#75787a" stroke-dasharray="1 2"/></svg>
<svg style="left:473px;top:106px" width="18" height="17" viewBox="0 0 18 17"><path d="M3 5a8 5 0 0 1 12 0" stroke="#4aa3df" stroke-width="1.6" fill="none"/><rect x="1.7" y="7.7" width="14" height="8" fill="none" stroke="#c0c3c5" stroke-width="1.4"/></svg>
<svg style="left:493px;top:114px" width="6" height="4" viewBox="0 0 6 4"><path d="M0 0h6L3 4z" fill="#8f9295"/></svg>
<svg style="left:505px;top:104px" width="1" height="24" viewBox="0 0 1 24"><line x1="0.5" y1="0" x2="0.5" y2="24" stroke="#75787a" stroke-dasharray="1 2"/></svg>
<svg style="left:510px;top:108px" width="15" height="15" viewBox="0 0 15 15"><circle cx="7.5" cy="7.5" r="6" fill="none" stroke="#b8c94a" stroke-width="2"/><path d="M7.5 2.5a5 5 0 0 0 0 10z" fill="#c0c3c5"/></svg>
<div class="t" style="left:527px;top:110px;font-size:12px;color:#cfd0d1;">AppTheme</div>
<svg style="left:593px;top:104px" width="1" height="24" viewBox="0 0 1 24"><line x1="0.5" y1="0" x2="0.5" y2="24" stroke="#75787a" stroke-dasharray="1 2"/></svg>
<svg style="left:599px;top:107px" width="15" height="16" viewBox="0 0 15 16"><rect x="0" y="0" width="15" height="3" fill="#97c03d"/><rect x="0" y="4" width="15" height="12" fill="#b5b8ba"/><rect x="0" y="5.5" width="15" height="1" fill="#4d5053"/></svg>
<div class="t" style="left:615px;top:110px;font-size:12px;color:#cfd0d1;">MainActivity</div>
<svg style="left:682px;top:114px" width="6" height="4" viewBox="0 0 6 4"><path d="M0 0h6L3 4z" fill="#8f9295"/></svg>
<svg style="left:699px;top:104px" width="1" height="24" viewBox="0 0 1 24"><line x1="0.5" y1="0" x2="0.5" y2="24" stroke="#75787a" stroke-dasharray="1 2"/></svg>
<svg style="left:704px;top:108px" width="14" height="14" viewBox="0 0 14 14"><circle cx="7" cy="7" r="7" fill="#5a9fd6"/><path d="M3 3c2 1 3 3 2 5s1 3 2 5M9 1c-1 2 1 3 3 3" stroke="#c8dff0" stroke-width="1.5" fill="none"/></svg>
<svg style="left:722px;top:114px" width="6" height="4" viewBox="0 0 6 4"><path d="M0 0h6L3 4z" fill="#8f9295"/></svg>
<svg style="left:734px;top:104px" width="1" height="24" viewBox="0 0 1 24"><line x1="0.5" y1="0" x2="0.5" y2="24" stroke="#75787a" stroke-dasharray="1 2"/></svg>
<svg style="left:740px;top:108px" width="15" height="17" viewBox="0 0 15 17"><g transform="scale(1.0)"><path d="M3 6a4 4 0 0 1 8 0z" fill="#97c03d"/><rect x="3" y="7" width="8" height="6" rx="1" fill="#97c03d"/><rect x="0.5" y="7" width="2" height="5" rx="1" fill="#97c03d"/><rect x="11.5" y="7" width="2" height="5" rx="1" fill="#97c03d"/><rect x="4.5" y="12" width="2" height="4" rx="1" fill="#97c03d"/><rect x="7.5" y="12" width="2" height="4" rx="1" fill="#97c03d"/></g></svg>
<div class="t" style="left:756px;top:110px;font-size:12px;color:#cfd0d1;">21</div>
<svg style="left:772px;top:114px" width="6" height="4" viewBox="0 0 6 4"><path d="M0 0h6L3 4z" fill="#8f9295"/></svg>
<svg style="left:354px;top:134px" width="13" height="13" viewBox="0 0 13 13"><rect x="0" y="0" width="13" height="13" fill="#e0e0e0"/><path d="M2 2l3 3M11 2l-3 3M2 11l3-3M11 11l-3-3" stroke="#555" stroke-width="1.2"/></svg>
<svg style="left:372px;top:139px" width="6" height="4" viewBox="0 0 6 4"><path d="M0 0h6L3 4z" fill="#8f9295"/></svg>
<svg style="left:383px;top:134px" width="14" height="13" viewBox="0 0 14 13"><rect x="0" y="0" width="14" height="13" fill="#e0e0e0"/><path d="M2 6.5h10M2 6.5l3-3M2 6.5l3 3M12 6.5l-3-3M12 6.5l-3 3" stroke="#444" stroke-width="1.2" fill="none"/></svg>
<svg style="left:406px;top:134px" width="13" height="13" viewBox="0 0 13 13"><rect x="0" y="0" width="13" height="13" fill="#e0e0e0"/><path d="M6.5 2v9M6.5 2l-3 3M6.5 2l3 3M6.5 11l-3-3M6.5 11l3-3" stroke="#444" stroke-width="1.2" fill="none"/></svg>
<div class="ab" style="left:1015px;top:132px;width:24px;height:24px;background:#5f6366;border:1px solid #74787b;border-radius:2px"></div>
<svg style="left:1019px;top:136px" width="16" height="16" viewBox="0 0 16 16"><circle cx="6.5" cy="6.5" r="5.5" fill="none" stroke="#c0c3c5" stroke-width="1.6"/><path d="M10.5 10.5l4.5 4.5" stroke="#c0c3c5" stroke-width="2"/><rect x="3.5" y="3.5" width="4" height="4" fill="#c0c3c5"/><rect x="5.5" y="5.5" width="4" height="4" fill="#c0c3c5" opacity="0.6"/></svg>
<svg style="left:1044px;top:136px" width="16" height="16" viewBox="0 0 16 16"><circle cx="6.5" cy="6.5" r="5.5" fill="none" stroke="#c0c3c5" stroke-width="1.6"/><path d="M10.5 10.5l4.5 4.5" stroke="#c0c3c5" stroke-width="2"/><text x="2.2" y="9.3" font-size="6.5" font-weight="bold" fill="#c0c3c5" font-family="Liberation Sans">1:1</text></svg>
<svg style="left:1068px;top:135px" width="1" height="21" viewBox="0 0 1 21"><line x1="0.5" y1="0" x2="0.5" y2="21" stroke="#75787a" stroke-dasharray="1 2"/></svg>
<svg style="left:1075px;top:136px" width="16" height="16" viewBox="0 0 16 16"><circle cx="6.5" cy="6.5" r="5.5" fill="none" stroke="#c0c3c5" stroke-width="1.6"/><path d="M10.5 10.5l4.5 4.5" stroke="#c0c3c5" stroke-width="2"/><path d="M6.5 3v7M3 6.5h7" stroke="#6fb0d8" stroke-width="2.8"/></svg>
<svg style="left:1100px;top:136px" width="16" height="16" viewBox="0 0 16 16"><circle cx="6.5" cy="6.5" r="5.5" fill="none" stroke="#c0c3c5" stroke-width="1.6"/><path d="M10.5 10.5l4.5 4.5" stroke="#c0c3c5" stroke-width="2"/><path d="M3 6.5h7" stroke="#6fb0d8" stroke-width="2.8"/></svg>
<svg style="left:1127px;top:136px" width="12" height="15" viewBox="0 0 12 15"><path d="M0.8 0.8h7l3.4 3.4v10H0.8z" fill="#4d5053" stroke="#c0c3c5" stroke-width="1.6"/><path d="M3 6.5h5.5M3 8.8h5.5M3 11.1h5.5" stroke="#6fb0d8" stroke-width="1.2"/></svg>
<svg style="left:1150px;top:135px" width="16" height="16" viewBox="0 0 16 16"><path d="M8 2.5A5.5 5.5 0 0 0 4.6 12.3" stroke="#62b2e4" stroke-width="2.6" fill="none"/><path d="M1.8 9.8L8 11.2 3.6 15.5Z" fill="#62b2e4"/><path d="M8 13.5A5.5 5.5 0 0 0 11.4 3.7" stroke="#4a9fd6" stroke-width="2.6" fill="none"/><path d="M14.2 6.2L8 4.8 12.4 0.5Z" fill="#4a9fd6"/></svg>
<svg style="left:1193px;top:135px" width="18" height="17" viewBox="0 0 18 17"><circle cx="8" cy="8" r="5.5" fill="none" stroke="#4aa3df" stroke-width="3.5" stroke-dasharray="2.2 1.4"/><circle cx="8" cy="8" r="4.5" fill="#4aa3df"/><circle cx="8" cy="8" r="1.8" fill="#4d5053"/><path d="M13 14h5l-2.5 3z" fill="#e0e0e0"/></svg>
<div class="ab" style="left:351px;top:160px;width:864px;height:16px;background:#4d5053"></div>
<div class="ab" style="left:351px;top:176px;width:15px;height:515px;background:#4d5053"></div>
<div class="ab" style="left:366px;top:176px;width:848px;height:515px;background:#a6a6a6"></div>
<div class="ab" style="left:351px;top:691px;width:863px;height:27px;background:#4d5053"></div>
<div class="ab" style="left:342px;top:691px;width:61px;height:25px;background:#4a6a96;border-radius:0 0 3px 3px"></div>
<div class="t" style="left:350px;top:697px;font-size:14px;color:#dfe3ea;">Design</div>
<div class="ab" style="left:403px;top:691px;width:48px;height:23px;background:#4a4d50;border:1px solid #3c3e40;border-top:none;border-radius:0 0 3px 3px"></div>
<div class="t" style="left:413px;top:697px;font-size:14px;color:#d6d7d8;">Text</div>
<div class="ab" style="left:1215px;top:98px;width:24px;height:620px;background:#4d5053"></div>
<div class="ab" style="left:1214px;top:98px;width:1px;height:593px;background:#36383a"></div>
<div class="ab" style="left:1214px;top:691px;width:25px;height:1px;background:#36383a"></div>
<div class="ab" style="left:1239px;top:75px;width:1px;height:643px;background:#36383a"></div>
<svg style="left:1220px;top:115px" width="13" height="12" viewBox="0 0 13 12"><rect x="0" y="2" width="11" height="10" fill="#4a78c8"/><path d="M2 5h7M2 7h7M2 9h7" stroke="#fff" stroke-width="1"/><path d="M8 7l5-6" stroke="#e7a43a" stroke-width="2"/></svg>
<div class="vr" style="left:1233px;top:132px;font-size:12px;color:#cfd0d1;">Component Tree</div>
<div class="ab" style="left:1240px;top:75px;width:20px;height:643px;background:#4d5053"></div>
<div class="t" style="left:1242px;top:86px;font-size:15px;color:#6b9cc0;font-weight:bold;font-style:italic">m</div>
<div class="vr" style="left:1256px;top:104px;font-size:12px;color:#cfd0d1;font-size:11.5px">Maven Projects</div>
<svg style="left:1243px;top:205px" width="13" height="14" viewBox="0 0 13 14"><circle cx="6.5" cy="7" r="5" fill="none" stroke="#6bc04b" stroke-width="2"/><circle cx="6.5" cy="7" r="2.2" fill="#2f9fa0"/></svg>
<div class="vr" style="left:1256px;top:222px;font-size:12px;color:#cfd0d1;font-size:11.6px">Gradle</div>
<svg style="left:1243px;top:280px" width="13" height="13" viewBox="0 0 13 13"><circle cx="6.5" cy="4" r="3.5" fill="#e9c27a"/><rect x="2" y="7" width="9" height="6" fill="#c98a3a"/><rect x="2" y="0" width="9" height="2.5" fill="#6b5a40"/></svg>
<div class="vr" style="left:1256px;top:296px;font-size:12px;color:#cfd0d1;">Commander</div>
<div class="ab" style="left:0px;top:718px;width:1260px;height:1px;background:#36383a"></div>
<div class="ab" style="left:0px;top:719px;width:1260px;height:21px;background:#4d5053;border-bottom:1px solid #434648"></div>
<svg style="left:30px;top:723px" width="11" height="11" viewBox="0 0 11 11"><rect x="0.5" y="0.5" width="10" height="10" fill="#3a3c3e" stroke="#9da2a6"/><path d="M2.5 3l2 2-2 2M5 8h3" stroke="#d0d0d0" fill="none" stroke-width="0.9"/></svg>
<div class="t" style="left:46px;top:723px;font-size:12px;color:#cfd0d1;">Terminal</div>
<svg style="left:114px;top:722px" width="13" height="15" viewBox="0 0 13 15"><g transform="scale(0.9)"><path d="M3 6a4 4 0 0 1 8 0z" fill="#97c03d"/><rect x="3" y="7" width="8" height="6" rx="1" fill="#97c03d"/><rect x="0.5" y="7" width="2" height="5" rx="1" fill="#97c03d"/><rect x="11.5" y="7" width="2" height="5" rx="1" fill="#97c03d"/><rect x="4.5" y="12" width="2" height="4" rx="1" fill="#97c03d"/><rect x="7.5" y="12" width="2" height="4" rx="1" fill="#97c03d"/></g></svg>
<div class="t" style="left:131px;top:723px;font-size:12px;color:#cfd0d1;"><u>6</u>: Android</div>
<svg style="left:211px;top:723px" width="12" height="12" viewBox="0 0 12 12"><rect x="0" y="0" width="12" height="12" fill="#e7c48a"/><rect x="2.5" y="2.5" width="7" height="7" fill="#b79a6a"/></svg>
<div class="t" style="left:228px;top:723px;font-size:12px;color:#cfd0d1;letter-spacing:-0.2px"><u>0</u>: Messages</div>
<svg style="left:313px;top:722px" width="15" height="14" viewBox="0 0 15 14"><circle cx="5" cy="4" r="4" fill="#b0b3b5"/><circle cx="9" cy="8" r="3.5" fill="#f0c890"/><rect x="5" y="11" width="9" height="3" fill="#4aa3df"/></svg>
<div class="t" style="left:330px;top:723px;font-size:12px;color:#cfd0d1;">TODO</div>
<svg style="left:907px;top:722px" width="13" height="13" viewBox="0 0 13 13"><path d="M0 0h13v9H6l-3 3v-3H0z" fill="#7a7d80"/></svg>
<div class="t" style="left:925px;top:723px;font-size:12px;color:#cfd0d1;letter-spacing:-0.25px">Event Log</div>
<svg style="left:1001px;top:722px" width="13" height="13" viewBox="0 0 13 13"><rect x="0" y="0" width="13" height="13" fill="#6b8fb0"/><rect x="2" y="2" width="9" height="9" fill="#3f5f80"/></svg>
<div class="t" style="left:1018px;top:723px;font-size:12px;color:#cfd0d1;">Gradle Console</div>
<svg style="left:1124px;top:722px" width="13" height="13" viewBox="0 0 13 13"><rect x="0" y="0" width="13" height="13" fill="#4a90d0"/><path d="M1 3l4 6 3-4 4 5" stroke="#e8f0f8" fill="none" stroke-width="1.3"/></svg>
<div class="t" style="left:1141px;top:723px;font-size:12px;color:#cfd0d1;">Memory Monitor</div>
<div class="ab" style="left:5px;top:743px;width:14px;height:13px;border:1px solid #a0a3a6;background:#5a5d60"></div>
<div class="t" style="left:31px;top:744px;font-size:12px;color:#cfd0d1;">Gradle build finished in 15 sec (27 minutes ago)</div>
<div class="t" style="left:1142px;top:744px;font-size:12px;color:#7f8285;letter-spacing:0.6px">n/a</div>
<div class="t" style="left:1181px;top:744px;font-size:12px;color:#7f8285;letter-spacing:0.6px">n/a</div>
<svg style="left:1217px;top:745px" width="10" height="10" viewBox="0 0 10 10"><path d="M1.5 4.5V3a2.2 2.2 0 0 1 4.4 0" stroke="#c5c7c9" fill="none" stroke-width="1.3"/><rect x="3.2" y="4.5" width="6.3" height="5.5" rx="0.8" fill="#d0d2d4"/><rect x="5.6" y="6" width="1.5" height="2.5" fill="#4d5053"/></svg>
<svg style="left:1240px;top:742px" width="12" height="15" viewBox="0 0 12 15"><rect x="2" y="0.5" width="8" height="5" rx="1.5" fill="#737679"/><rect x="0" y="4.5" width="12" height="1.2" fill="#737679"/><path d="M1.5 6.5h9l-0.5 7h-8z" fill="#6d7073"/></svg>
<svg style="left:0;top:0" width="1260" height="760" viewBox="0 0 1260 760">
<defs></defs>
<filter id="bl1" x="-20%" y="-20%" width="140%" height="140%"><feGaussianBlur stdDeviation="3"/></filter>
<rect x="400.0" y="427.5" width="127.0" height="20.0" rx="14" fill="rgba(0,0,0,0.5)" filter="url(#bl1)"/>
<rect x="395.8" y="230" width="2" height="43" rx="1" fill="#2b2b2b"/>
<rect x="529" y="212.5" width="2.2" height="17" rx="1" fill="#2b2b2b"/>
<path d="M397.00 190.80 C397.00 186.11 402.82 183.24 410.00 182.30 Q463.50 175.30 517.00 182.30 C524.18 183.24 530.00 186.11 530.00 190.80 L530.00 430.50 C530.00 436.58 523.73 440.62 516.00 441.50 Q463.50 447.50 411.00 441.50 C403.27 440.62 397.00 436.58 397.00 430.50 Z" fill="#1b1b1b" stroke="#222" stroke-width="1"/>
<rect x="402.40" y="200.00" width="122.10" height="7.60" fill="#000"/>
<text x="508.30" y="206.46" font-size="7.22" fill="#f0f0f0" font-family="Liberation Sans" textLength="15.20" lengthAdjust="spacingAndGlyphs">5:00</text>
<rect x="502.60" y="200.91" width="3.80" height="5.93" fill="#fff"/>
<path d="M491.96 202.28 Q496.52 199.62 501.08 202.28 L496.52 206.84 Z" fill="#fff"/>
<clipPath id="cp2"><path d="M397.00 190.80 C397.00 186.11 402.82 183.24 410.00 182.30 Q463.50 175.30 517.00 182.30 C524.18 183.24 530.00 186.11 530.00 190.80 L530.00 430.50 C530.00 436.58 523.73 440.62 516.00 441.50 Q463.50 447.50 411.00 441.50 C403.27 440.62 397.00 436.58 397.00 430.50 Z"/></clipPath>
<linearGradient id="g3" x1="0" y1="0" x2="0" y2="1"><stop offset="0" stop-color="#ffffff"/><stop offset="1" stop-color="#ffffff"/></linearGradient>
<path d="M396 176 L478 176 L466 207.6 L396 207.6 Z" fill="#fff" opacity="0.15" clip-path="url(#cp2)"/>
<circle cx="463.2" cy="191" r="2.8" fill="#1e1e1e" stroke="#4a4a4a" stroke-width="0.9"/>
<circle cx="418.6" cy="192.5" r="1" fill="#555"/>
<circle cx="508" cy="192" r="0.9" fill="#333"/><circle cx="512" cy="192" r="0.9" fill="#333"/>
<rect x="402.40" y="207.60" width="122.10" height="193.10" fill="#f0f0f0"/>
<text x="408.28" y="217.40" font-size="4.67" fill="#9a9a9a" font-family="Liberation Sans">Hello world!</text>
<rect x="402.40" y="400.70" width="122.10" height="16.30" fill="#000"/>
<path d="M439.51 404.65 L432.37 408.85 L439.51 413.05 Z" fill="none" stroke="#d8d8d8" stroke-width="1.1"/>
<circle cx="463.45" cy="408.85" r="4.20" fill="none" stroke="#d8d8d8" stroke-width="1.1"/>
<rect x="487.18" y="405.28" width="7.14" height="7.14" fill="none" stroke="#d8d8d8" stroke-width="1.1"/>
<filter id="bl4" x="-20%" y="-20%" width="140%" height="140%"><feGaussianBlur stdDeviation="3"/></filter>
<rect x="605.0" y="379.0" width="93.3" height="20.0" rx="14" fill="rgba(0,0,0,0.5)" filter="url(#bl4)"/>
<linearGradient id="g5" x1="0" y1="0" x2="0" y2="1"><stop offset="0" stop-color="#9a948e"/><stop offset="0.08" stop-color="#6f6a65"/><stop offset="0.5" stop-color="#5c5853"/><stop offset="0.85" stop-color="#7d7771"/><stop offset="1" stop-color="#47433f"/></linearGradient>
<path d="M602.00 214.20 C602.00 207.57 609.61 203.93 619.00 202.20 Q651.65 196.20 684.30 202.20 C693.69 203.93 701.30 207.57 701.30 214.20 L701.30 379.00 C701.30 387.28 693.69 392.85 684.30 394.00 Q651.65 398.00 619.00 394.00 C609.61 392.85 602.00 387.28 602.00 379.00 Z" fill="url(#g5)" stroke="#1f1d1b" stroke-width="1.5"/>
<path d="M605.2 222 C605.2 214 610 209.6 618 209.6 L685.8 209.6 C693.8 209.6 698.6 214 698.6 222 L698.6 362 C698.6 368 695 369 688 369.5 Q651.9 377 615.8 369.5 C608.8 369 605.2 368 605.2 362 Z" fill="#0c0c0c"/>
<rect x="631.5" y="205.5" width="40" height="2.5" rx="1.2" fill="#3e3b38"/>
<rect x="610.50" y="221.90" width="82.60" height="5.10" fill="#000"/>
<text x="681.90" y="226.24" font-size="4.84" fill="#f0f0f0" font-family="Liberation Sans" textLength="10.20" lengthAdjust="spacingAndGlyphs">5:00</text>
<rect x="678.08" y="222.51" width="2.55" height="3.98" fill="#fff"/>
<path d="M670.94 223.43 Q674.00 221.65 677.06 223.43 L674.00 226.49 Z" fill="#fff"/>
<rect x="610.50" y="227.00" width="82.60" height="132.20" fill="#f0f0f0"/>
<text x="614.80" y="234.72" font-size="3.57" fill="#9a9a9a" font-family="Liberation Sans">Hello world!</text>
<rect x="619.0" y="364.8" width="3" height="2.4" fill="#8a8a8a"/>
<rect x="640.5" y="364.8" width="3" height="2.4" fill="#8a8a8a"/>
<rect x="660.8" y="364.8" width="3" height="2.4" fill="#8a8a8a"/>
<rect x="681.5" y="364.8" width="3" height="2.4" fill="#8a8a8a"/>
<circle cx="651.8" cy="382.9" r="5" fill="#d6d6d6" stroke="#2a2a2a" stroke-width="1.2"/>
<filter id="bl6" x="-20%" y="-20%" width="140%" height="140%"><feGaussianBlur stdDeviation="3"/></filter>
<rect x="775.2" y="372.5" width="91.2" height="20.0" rx="16" fill="rgba(0,0,0,0.55)" filter="url(#bl6)"/>
<rect x="771" y="240" width="2" height="34" fill="#1a1a1a"/>
<rect x="868.8" y="222" width="1.6" height="14" fill="#1a1a1a"/>
<path d="M772.20 219.70 C772.20 210.03 781.15 203.36 792.20 202.20 Q820.80 199.20 849.40 202.20 C860.45 203.36 869.40 210.03 869.40 219.70 L869.40 370.50 C869.40 380.17 860.45 386.84 849.40 388.00 Q820.80 391.00 792.20 388.00 C781.15 386.84 772.20 380.17 772.20 370.50 Z" fill="#080808"/>
<linearGradient id="g7" x1="0" y1="0" x2="0" y2="1"><stop offset="0" stop-color="#555555"/><stop offset="0.15" stop-color="#262626"/><stop offset="0.6" stop-color="#1a1a1a"/><stop offset="1" stop-color="#262626"/></linearGradient>
<path d="M774.20 219.70 C774.20 211.03 782.26 204.90 792.20 204.00 Q820.80 201.40 849.40 204.00 C859.34 204.90 867.40 211.03 867.40 219.70 L867.40 370.50 C867.40 379.17 859.34 385.30 849.40 386.20 Q820.80 388.80 792.20 386.20 C782.26 385.30 774.20 379.17 774.20 370.50 Z" fill="url(#g7)" stroke="#5a5a5a" stroke-width="0.8"/>
<clipPath id="cp8"><path d="M774.20 219.70 C774.20 211.03 782.26 204.90 792.20 204.00 Q820.80 201.40 849.40 204.00 C859.34 204.90 867.40 211.03 867.40 219.70 L867.40 370.50 C867.40 379.17 859.34 385.30 849.40 386.20 Q820.80 388.80 792.20 386.20 C782.26 385.30 774.20 379.17 774.20 370.50 Z"/></clipPath>
<path d="M832 200 Q820 203 819 214 Q818 226 813 232.6 L875 232.6 L875 200 Z" fill="#000" opacity="0.85" clip-path="url(#cp8)"/>
<rect x="809.5" y="211" width="22.3" height="1.6" rx="0.8" fill="#111" stroke="#444" stroke-width="0.4"/>
<circle cx="842" cy="211.5" r="1.2" fill="#333"/><circle cx="793" cy="212" r="0.9" fill="#444"/><circle cx="797" cy="212" r="0.9" fill="#444"/>
<rect x="779.80" y="228.20" width="82.20" height="4.40" fill="#000"/>
<text x="852.20" y="231.94" font-size="4.18" fill="#f0f0f0" font-family="Liberation Sans" textLength="8.80" lengthAdjust="spacingAndGlyphs">5:00</text>
<rect x="848.90" y="228.73" width="2.20" height="3.43" fill="#fff"/>
<path d="M842.74 229.52 Q845.38 227.98 848.02 229.52 L845.38 232.16 Z" fill="#fff"/>
<rect x="779.80" y="232.60" width="82.20" height="132.40" fill="#f0f0f0"/>
<text x="784.09" y="240.32" font-size="3.57" fill="#9a9a9a" font-family="Liberation Sans">Hello world!</text>
<rect x="788.5" y="373" width="5" height="3" fill="none" stroke="#6a6a6a" stroke-width="0.8"/>
<rect x="809.5" y="373" width="5" height="3" fill="none" stroke="#6a6a6a" stroke-width="0.8"/>
<rect x="827.5" y="373" width="5" height="3" fill="none" stroke="#6a6a6a" stroke-width="0.8"/>
<rect x="846.5" y="373" width="5" height="3" fill="none" stroke="#6a6a6a" stroke-width="0.8"/>
<filter id="bl9" x="-20%" y="-20%" width="140%" height="140%"><feGaussianBlur stdDeviation="3"/></filter>
<rect x="952.5" y="344.3" width="74.5" height="20.0" rx="14" fill="rgba(0,0,0,0.5)" filter="url(#bl9)"/>
<linearGradient id="g10" x1="0" y1="0" x2="0" y2="1"><stop offset="0" stop-color="#404040"/><stop offset="0.14" stop-color="#111"/><stop offset="1" stop-color="#060606"/></linearGradient>
<path d="M949.50 214.00 C949.50 207.65 956.22 204.14 964.50 202.50 Q989.75 197.50 1015.00 202.50 C1023.28 204.14 1030.00 207.65 1030.00 214.00 L1030.00 345.30 C1030.00 352.76 1023.28 357.16 1015.00 358.80 Q989.75 363.80 964.50 358.80 C956.22 357.16 949.50 352.76 949.50 345.30 Z" fill="url(#g10)" stroke="#8c8c8c" stroke-width="1.1"/>
<clipPath id="cp11"><path d="M949.50 214.00 C949.50 207.65 956.22 204.14 964.50 202.50 Q989.75 197.50 1015.00 202.50 C1023.28 204.14 1030.00 207.65 1030.00 214.00 L1030.00 345.30 C1030.00 352.76 1023.28 357.16 1015.00 358.80 Q989.75 363.80 964.50 358.80 C956.22 357.16 949.50 352.76 949.50 345.30 Z"/></clipPath>
<path d="M950 198 L1003 198 Q990 204 985 220 L950 220 Z" fill="#fff" opacity="0.1" clip-path="url(#cp11)"/>
<rect x="973" y="206" width="22" height="1.6" rx="0.8" fill="#2e2e2e"/>
<circle cx="1015" cy="207" r="1.4" fill="#2a2a2a"/><circle cx="1000" cy="206.5" r="0.6" fill="#333"/><circle cx="1003" cy="206.5" r="0.6" fill="#333"/>
<rect x="954.50" y="220.00" width="70.50" height="4.50" fill="#000"/>
<text x="1015.00" y="223.82" font-size="4.27" fill="#f0f0f0" font-family="Liberation Sans" textLength="9.00" lengthAdjust="spacingAndGlyphs">5:00</text>
<rect x="1011.62" y="220.54" width="2.25" height="3.51" fill="#fff"/>
<path d="M1005.33 221.35 Q1008.03 219.78 1010.73 221.35 L1008.03 224.05 Z" fill="#fff"/>
<rect x="954.50" y="224.50" width="70.50" height="110.50" fill="#f0f0f0"/>
<text x="958.32" y="230.94" font-size="2.89" fill="#9a9a9a" font-family="Liberation Sans">Hello world!</text>
<path d="M976.33 337.65 L971.91 340.25 L976.33 342.85 Z" fill="none" stroke="#d8d8d8" stroke-width="0.9"/>
<circle cx="989.75" cy="340.25" r="2.60" fill="none" stroke="#d8d8d8" stroke-width="0.9"/>
<rect x="1003.04" y="338.04" width="4.42" height="4.42" fill="none" stroke="#d8d8d8" stroke-width="0.9"/>
<filter id="bl12" x="-20%" y="-20%" width="140%" height="140%"><feGaussianBlur stdDeviation="3"/></filter>
<rect x="1100.3" y="404.8" width="109.1" height="20.0" rx="16" fill="rgba(0,0,0,0.5)" filter="url(#bl12)"/>
<path d="M1097.30 216.80 C1097.30 209.62 1104.91 205.19 1114.30 203.80 Q1154.85 197.80 1195.40 203.80 C1204.79 205.19 1212.40 209.62 1212.40 216.80 L1212.40 405.80 C1212.40 412.98 1204.79 417.41 1195.40 418.80 Q1154.85 424.80 1114.30 418.80 C1104.91 417.41 1097.30 412.98 1097.30 405.80 Z" fill="#777" stroke="#2a2a2a" stroke-width="1"/>
<linearGradient id="g13" x1="0" y1="0" x2="0" y2="1"><stop offset="0" stop-color="#262626"/><stop offset="0.5" stop-color="#1e1e1e"/><stop offset="1" stop-color="#262626"/></linearGradient>
<path d="M1099.30 216.80 C1099.30 210.50 1106.02 206.46 1114.30 205.40 Q1154.85 200.20 1195.40 205.40 C1203.68 206.46 1210.40 210.50 1210.40 216.80 L1210.40 405.80 C1210.40 412.10 1203.68 416.14 1195.40 417.20 Q1154.85 422.40 1114.30 417.20 C1106.02 416.14 1099.30 412.10 1099.30 405.80 Z" fill="url(#g13)" stroke="#111" stroke-width="0.8"/>
<rect x="1102.50" y="224.80" width="104.30" height="5.60" fill="#000"/>
<text x="1194.60" y="229.56" font-size="5.32" fill="#f0f0f0" font-family="Liberation Sans" textLength="11.20" lengthAdjust="spacingAndGlyphs">5:00</text>
<rect x="1190.40" y="225.47" width="2.80" height="4.37" fill="#fff"/>
<path d="M1182.56 226.48 Q1185.92 224.52 1189.28 226.48 L1185.92 229.84 Z" fill="#fff"/>
<clipPath id="cp14"><path d="M1099.30 216.80 C1099.30 210.50 1106.02 206.46 1114.30 205.40 Q1154.85 200.20 1195.40 205.40 C1203.68 206.46 1210.40 210.50 1210.40 216.80 L1210.40 405.80 C1210.40 412.10 1203.68 416.14 1195.40 417.20 Q1154.85 422.40 1114.30 417.20 C1106.02 416.14 1099.30 412.10 1099.30 405.80 Z"/></clipPath>
<path d="M1097 199 L1164 199 L1152 230.4 L1097 230.4 Z" fill="#fff" opacity="0.13" clip-path="url(#cp14)"/>
<circle cx="1195" cy="210" r="1.6" fill="#2a2a2a"/>
<rect x="1102.50" y="230.40" width="104.30" height="155.20" fill="#f0f0f0"/>
<text x="1107.67" y="238.76" font-size="3.91" fill="#9a9a9a" font-family="Liberation Sans">Hello world!</text>
<rect x="1102.50" y="385.60" width="104.30" height="13.20" fill="#000"/>
<path d="M1136.03 388.60 L1129.91 392.20 L1136.03 395.80 Z" fill="none" stroke="#d8d8d8" stroke-width="1.0"/>
<circle cx="1154.65" cy="392.20" r="3.60" fill="none" stroke="#d8d8d8" stroke-width="1.0"/>
<rect x="1173.09" y="389.14" width="6.12" height="6.12" fill="none" stroke="#d8d8d8" stroke-width="1.0"/>
<filter id="bl15" x="-20%" y="-20%" width="140%" height="140%"><feGaussianBlur stdDeviation="3"/></filter>
<rect x="439.6" y="629.3" width="84.7" height="20.0" rx="12" fill="rgba(0,0,0,0.5)" filter="url(#bl15)"/>
<linearGradient id="g16" x1="0" y1="0" x2="0" y2="1"><stop offset="0" stop-color="#3a3a3a"/><stop offset="0.05" stop-color="#1c1c1c"/><stop offset="0.95" stop-color="#1c1c1c"/><stop offset="1" stop-color="#333"/></linearGradient>
<path d="M436.60 483.20 C436.60 478.51 441.97 475.69 448.60 474.70 Q481.95 469.70 515.30 474.70 C521.93 475.69 527.30 478.51 527.30 483.20 L527.30 635.30 C527.30 639.99 521.93 642.81 515.30 643.80 Q481.95 648.80 448.60 643.80 C441.97 642.81 436.60 639.99 436.60 635.30 Z" fill="url(#g16)" stroke="#111" stroke-width="1"/>
<rect x="462" y="474.5" width="40" height="2" rx="1" fill="#2e2e2e"/>
<circle cx="508" cy="476" r="1" fill="#444"/>
<rect x="438.2" y="482.2" width="87.3" height="156" fill="none" stroke="#c4dcf7" stroke-width="3"/>
<rect x="440.70" y="484.60" width="83.50" height="4.90" fill="#000"/>
<text x="513.40" y="488.76" font-size="4.65" fill="#f0f0f0" font-family="Liberation Sans" textLength="9.80" lengthAdjust="spacingAndGlyphs">5:00</text>
<rect x="509.73" y="485.19" width="2.45" height="3.82" fill="#fff"/>
<path d="M502.87 486.07 Q505.81 484.36 508.75 486.07 L505.81 489.01 Z" fill="#fff"/>
<rect x="440.70" y="489.50" width="83.50" height="135.20" fill="#f0f0f0"/>
<text x="445.04" y="495.94" font-size="2.89" fill="#9a9a9a" font-family="Liberation Sans">Hello world!</text>
<rect x="440.70" y="624.70" width="83.50" height="10.00" fill="#000"/>
<path d="M467.93 627.10 L463.51 629.70 L467.93 632.30 Z" fill="none" stroke="#d8d8d8" stroke-width="0.9"/>
<circle cx="482.45" cy="629.70" r="2.60" fill="none" stroke="#d8d8d8" stroke-width="0.9"/>
<rect x="496.84" y="627.49" width="4.42" height="4.42" fill="none" stroke="#d8d8d8" stroke-width="0.9"/>
<rect x="469.5" y="640.5" width="25" height="2.2" rx="1.1" fill="#3a3a3a"/>
<filter id="bl17" x="-20%" y="-20%" width="140%" height="140%"><feGaussianBlur stdDeviation="3"/></filter>
<rect x="593.3" y="669.3" width="114.7" height="20.0" rx="8" fill="rgba(0,0,0,0.5)" filter="url(#bl17)"/>
<linearGradient id="g18" x1="0" y1="0" x2="0" y2="1"><stop offset="0" stop-color="#2a2a2a"/><stop offset="0.5" stop-color="#1f1f1f"/><stop offset="1" stop-color="#252525"/></linearGradient>
<path d="M590.30 478.20 C590.30 474.78 593.88 472.14 598.30 472.00 Q650.65 470.40 703.00 472.00 C707.42 472.14 711.00 474.78 711.00 478.20 L711.00 679.30 C711.00 682.72 707.42 685.36 703.00 685.50 Q650.65 687.10 598.30 685.50 C593.88 685.36 590.30 682.72 590.30 679.30 Z" fill="url(#g18)" stroke="#151515" stroke-width="1"/>
<clipPath id="cp19"><path d="M590.30 478.20 C590.30 474.78 593.88 472.14 598.30 472.00 Q650.65 470.40 703.00 472.00 C707.42 472.14 711.00 474.78 711.00 478.20 L711.00 679.30 C711.00 682.72 707.42 685.36 703.00 685.50 Q650.65 687.10 598.30 685.50 C593.88 685.36 590.30 682.72 590.30 679.30 Z"/></clipPath>
<path d="M590 470 L667 470 L651 497 L590 497 Z" fill="#fff" opacity="0.08" clip-path="url(#cp19)"/>
<circle cx="677" cy="488.5" r="1.4" fill="#3a3a3a"/>
<rect x="599.70" y="496.80" width="102.00" height="3.50" fill="#000"/>
<text x="693.70" y="499.78" font-size="3.32" fill="#f0f0f0" font-family="Liberation Sans" textLength="7.00" lengthAdjust="spacingAndGlyphs">5:00</text>
<rect x="691.08" y="497.22" width="1.75" height="2.73" fill="#fff"/>
<path d="M686.17 497.85 Q688.27 496.62 690.38 497.85 L688.27 499.95 Z" fill="#fff"/>
<rect x="599.70" y="500.30" width="102.00" height="152.00" fill="#f0f0f0"/>
<text x="604.78" y="506.10" font-size="2.55" fill="#9a9a9a" font-family="Liberation Sans">Hello world!</text>
<rect x="599.70" y="652.30" width="102.00" height="8.20" fill="#000"/>
<path d="M638.86 654.20 L635.12 656.40 L638.86 658.60 Z" fill="none" stroke="#d8d8d8" stroke-width="0.8"/>
<circle cx="650.70" cy="656.40" r="2.20" fill="none" stroke="#d8d8d8" stroke-width="0.8"/>
<rect x="662.43" y="654.53" width="3.74" height="3.74" fill="none" stroke="#d8d8d8" stroke-width="0.8"/>
<circle cx="650.5" cy="673" r="1" fill="#666"/>
<filter id="bl20" x="-20%" y="-20%" width="140%" height="140%"><feGaussianBlur stdDeviation="2.5"/></filter>
<rect x="754.0" y="584.6" width="131.8" height="20.0" rx="6" fill="rgba(0,0,0,0.5)" filter="url(#bl20)"/>
<linearGradient id="g21" x1="0" y1="0" x2="1" y2="0"><stop offset="0" stop-color="#3c3c3c"/><stop offset="0.25" stop-color="#161616"/><stop offset="0.7" stop-color="#050505"/><stop offset="1" stop-color="#161616"/></linearGradient>
<linearGradient id="g22" x1="0" y1="0" x2="0" y2="1"><stop offset="0" stop-color="#444"/><stop offset="0.3" stop-color="#1a1a1a"/><stop offset="0.7" stop-color="#0a0a0a"/><stop offset="1" stop-color="#222"/></linearGradient>
<path d="M751.00 516.40 C751.00 513.25 753.69 510.73 757.00 510.70 Q819.90 510.10 882.80 510.70 C886.11 510.73 888.80 513.25 888.80 516.40 L888.80 596.60 C888.80 599.75 886.11 602.27 882.80 602.30 Q819.90 602.90 757.00 602.30 C753.69 602.27 751.00 599.75 751.00 596.60 Z" fill="url(#g22)" stroke="#0a0a0a" stroke-width="1"/>
<rect x="764.90" y="516.00" width="110.10" height="2.20" fill="#111"/>
<rect x="867.95" y="516.26" width="1.10" height="1.72" fill="#fff"/>
<path d="M864.87 516.66 Q866.19 515.89 867.51 516.66 L866.19 517.98 Z" fill="#fff"/>
<rect x="764.90" y="518.20" width="110.10" height="75.10" fill="#f0f0f0"/>
<text x="770.30" y="522.40" font-size="1.70" fill="#9a9a9a" font-family="Liberation Sans">Hello world!</text>
<path d="M812.43 594.80 L809.71 596.40 L812.43 598.00 Z" fill="none" stroke="#d8d8d8" stroke-width="0.6"/>
<circle cx="819.95" cy="596.40" r="1.60" fill="none" stroke="#d8d8d8" stroke-width="0.6"/>
<rect x="827.39" y="595.04" width="2.72" height="2.72" fill="none" stroke="#d8d8d8" stroke-width="0.6"/>
<circle cx="757.5" cy="556.5" r="0.7" fill="#444"/><circle cx="882.5" cy="556.5" r="0.7" fill="#444"/>
<filter id="bl23" x="-20%" y="-20%" width="140%" height="140%"><feGaussianBlur stdDeviation="4"/></filter>
<rect x="919.8" y="632.8" width="253.8" height="20.0" rx="24" fill="rgba(0,0,0,0.5)" filter="url(#bl23)"/>
<linearGradient id="g24" x1="0" y1="0" x2="1" y2="0"><stop offset="0" stop-color="#2e2e2e"/><stop offset="0.04" stop-color="#1b1b1b"/><stop offset="0.96" stop-color="#1b1b1b"/><stop offset="1" stop-color="#2e2e2e"/></linearGradient>
<path d="M916.80 493.70 C916.80 482.38 928.44 473.61 942.80 473.20 Q1046.70 470.20 1150.60 473.20 C1164.96 473.61 1176.60 482.38 1176.60 493.70 L1176.60 627.80 C1176.60 639.12 1164.96 647.89 1150.60 648.30 Q1046.70 651.30 942.80 648.30 C928.44 647.89 916.80 639.12 916.80 627.80 Z" fill="url(#g24)" stroke="#121212" stroke-width="1"/>
<clipPath id="cp25"><path d="M916.80 493.70 C916.80 482.38 928.44 473.61 942.80 473.20 Q1046.70 470.20 1150.60 473.20 C1164.96 473.61 1176.60 482.38 1176.60 493.70 L1176.60 627.80 C1176.60 639.12 1164.96 647.89 1150.60 648.30 Q1046.70 651.30 942.80 648.30 C928.44 647.89 916.80 639.12 916.80 627.80 Z"/></clipPath>
<path d="M916 470 L1052 470 L1040 493.5 L916 493.5 Z" fill="#fff" opacity="0.07" clip-path="url(#cp25)"/>
<circle cx="1036.5" cy="486.5" r="0.9" fill="#3c3c3c"/><circle cx="1057.5" cy="486.5" r="0.9" fill="#3c3c3c"/>
<rect x="939.10" y="493.40" width="215.70" height="3.80" fill="#000"/>
<text x="1146.20" y="496.63" font-size="3.61" fill="#f0f0f0" font-family="Liberation Sans" textLength="7.60" lengthAdjust="spacingAndGlyphs">5:00</text>
<rect x="1143.35" y="493.86" width="1.90" height="2.96" fill="#fff"/>
<path d="M1138.03 494.54 Q1140.31 493.21 1142.59 494.54 L1140.31 496.82 Z" fill="#fff"/>
<rect x="939.10" y="497.20" width="215.70" height="123.10" fill="#f0f0f0"/>
<text x="948.73" y="503.00" font-size="2.55" fill="#9a9a9a" font-family="Liberation Sans">Hello world!</text>
<rect x="939.10" y="620.30" width="215.70" height="8.40" fill="#000"/>
<path d="M1035.21 622.30 L1031.47 624.50 L1035.21 626.70 Z" fill="none" stroke="#d8d8d8" stroke-width="0.8"/>
<circle cx="1046.95" cy="624.50" r="2.20" fill="none" stroke="#d8d8d8" stroke-width="0.8"/>
<rect x="1058.58" y="622.63" width="3.74" height="3.74" fill="none" stroke="#d8d8d8" stroke-width="0.8"/>
<circle cx="1046.7" cy="642.6" r="1.2" fill="#ddd"/>
</svg>
<div class="t" style="left:551.5px;top:185.5px;width:200px;text-align:center;font-size:11px;color:#f8f8f8;letter-spacing:0.35px;-webkit-text-stroke:0.25px #f8f8f8">Nexus One (3.7")</div>
<div class="t" style="left:720.4px;top:185.5px;width:200px;text-align:center;font-size:11px;color:#f8f8f8;letter-spacing:0.35px;-webkit-text-stroke:0.25px #f8f8f8">Nexus S (4.0")</div>
<div class="t" style="left:889.2px;top:185.5px;width:200px;text-align:center;font-size:11px;color:#f8f8f8;letter-spacing:0.35px;-webkit-text-stroke:0.25px #f8f8f8">Galaxy Nexus (4.7")</div>
<div class="t" style="left:1055.0px;top:185.5px;width:200px;text-align:center;font-size:11px;color:#f8f8f8;letter-spacing:0.35px;-webkit-text-stroke:0.25px #f8f8f8">Nexus 4 (4.7")</div>
<div class="t" style="left:381.8px;top:456.9px;width:200px;text-align:center;font-size:11px;color:#f8f8f8;letter-spacing:0.35px;-webkit-text-stroke:0.25px #f8f8f8">Nexus 6</div>
<div class="t" style="left:550.7px;top:457.7px;width:200px;text-align:center;font-size:11px;color:#f8f8f8;letter-spacing:0.35px;-webkit-text-stroke:0.25px #f8f8f8">Nexus 7 (7.0")</div>
<div class="t" style="left:720.6px;top:496.5px;width:200px;text-align:center;font-size:11px;color:#f8f8f8;letter-spacing:0.35px;-webkit-text-stroke:0.25px #f8f8f8">Nexus 9 (8.9")</div>
<div class="t" style="left:946.8px;top:457.5px;width:200px;text-align:center;font-size:11px;color:#f8f8f8;letter-spacing:0.35px;-webkit-text-stroke:0.25px #f8f8f8">Nexus 10 (10.1")</div>
</body></html>
